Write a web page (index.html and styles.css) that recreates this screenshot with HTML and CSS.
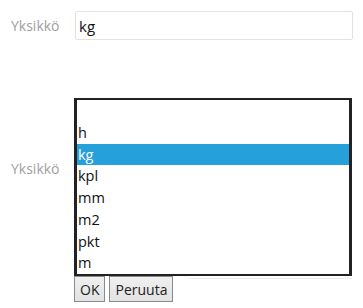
FILE: index.html
```html
<!DOCTYPE html>
<html lang="fi">
  <head>
    <meta charset="UTF-8" />
    <title>Yksikkö</title>
    <link rel="stylesheet" href="styles.css">
  </head>
  <body>
    <div class="row">
      <label class="label top-label">Yksikkö</label>
      <input class="text-input" type="text" value="kg" />
    </div>
    <div class="row picker-row">
      <label class="label list-label">Yksikkö</label>
      <div class="picker">
        <ul class="listbox">
          <li class="item">&nbsp;</li>
          <li class="item">h</li>
          <li class="item selected">kg</li>
          <li class="item">kpl</li>
          <li class="item">mm</li>
          <li class="item">m2</li>
          <li class="item">pkt</li>
          <li class="item">m</li>
        </ul>
        <div class="buttons">
          <button class="btn">OK</button>
          <button class="btn">Peruuta</button>
          <div class="ghost-line"></div>
        </div>
      </div>
    </div>
  </body>
</html>
```

FILE: styles.css
```css
body {
  margin: 0;
  font-family: "Open Sans", "Noto Sans", sans-serif;
  background: #fff;
}

.row {
  display: flex;
  padding-left: 11px;
}
.row:first-child {
  padding-top: 11px;
}

.label {
  width: 64px;
  color: #a0a0a0;
  font-size: 14px;
}
.top-label {
  line-height: 29px;
}

.text-input {
  box-sizing: border-box;
  width: 278px;
  height: 29px;
  margin: 0;
  padding: 0 3px;
  border: 1px solid #dde3ea;
  border-radius: 2px;
  font-family: inherit;
  font-size: 15px;
  color: #111;
  outline: none;
}

.picker-row {
  margin-top: 58px;
}
.list-label {
  width: 63px;
  padding-top: 61px;
}

.picker {
  display: flex;
  flex-direction: column;
  width: 278px;
}

.listbox {
  list-style: none;
  margin: 0;
  padding: 0;
  border-style: solid;
  border-color: #222;
  border-width: 2px 3px 2px 3px;
}
.item {
  height: 21.75px;
  line-height: 21.75px;
  padding-left: 1px;
  font-size: 14.5px;
  color: #111;
}
.item.selected {
  background: #26a0da;
  color: #fff;
}

.buttons {
  display: flex;
  gap: 4px;
}
.btn {
  height: 26px;
  margin: 0;
  padding: 0 5px;
  border: 1px solid #8a8a8a;
  background: linear-gradient(#f0f0f0, #e2e2e2);
  font-family: inherit;
  font-size: 14px;
  color: #222;
}
.ghost-line {
  flex: 1;
  margin-left: 13px;
  margin-top: 2px;
  border-top: 1px solid #ececec;
}
```
